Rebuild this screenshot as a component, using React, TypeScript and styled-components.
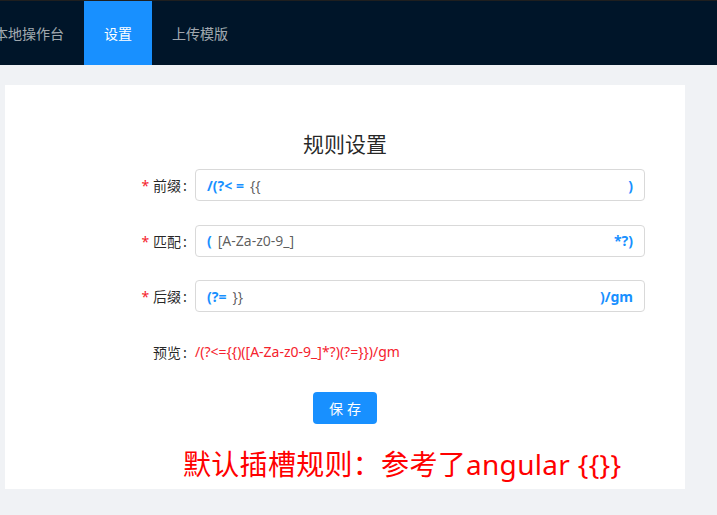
import React from 'react';
import styled, { createGlobalStyle } from 'styled-components';

const GlobalStyle = createGlobalStyle`
  html, body {
    margin: 0;
    padding: 0;
    background: #f0f2f5;
    font-family: "Noto Sans", "Noto Sans CJK SC", sans-serif;
    font-size: 14px;
  }
`;

const Page = styled.div`
  width: 717px;
  height: 515px;
  overflow: hidden;
  background: #f0f2f5;
  border-top: 1px solid #1f1f1f;
  box-sizing: border-box;
`;

const Header = styled.header`
  height: 64px;
  background: #001529;
  display: flex;
`;

const Menu = styled.nav`
  display: flex;
  margin-left: -26px;
`;

const MenuItem = styled.div<{ $active?: boolean }>`
  padding: 0 20px;
  line-height: 64px;
  font-family: "Noto Sans CJK SC", sans-serif;
  font-size: 14px;
  white-space: nowrap;
  color: ${p => (p.$active ? '#fff' : 'rgba(255,255,255,0.65)')};
  background: ${p => (p.$active ? '#1890ff' : 'transparent')};
`;

const Content = styled.main`
  padding: 20px 32px 0 5px;
`;

const Card = styled.section`
  background: #fff;
  height: 404px;
  padding-top: 42px;
  box-sizing: border-box;
`;

const Title = styled.h2`
  margin: 0 0 10px;
  text-align: center;
  font-family: "Noto Sans CJK SC", sans-serif;
  font-weight: 400;
  font-size: 21px;
  line-height: 32px;
  color: rgba(0, 0, 0, 0.85);
`;

const Row = styled.div<{ $gap?: number }>`
  display: grid;
  grid-template-columns: 190px 450px;
  align-items: center;
  height: 32px;
  margin-bottom: ${p => p.$gap ?? 23.5}px;
`;

const Label = styled.label`
  text-align: right;
  font-family: "Noto Sans CJK SC", sans-serif;
  font-size: 14px;
  color: rgba(0, 0, 0, 0.85);

  &::after {
    content: ':';
    margin: 0 8px 0 2px;
  }
`;

const Required = styled.span`
  color: #f5222d;
  margin-right: 4px;
  font-family: "Noto Sans", sans-serif;
`;

const InputBox = styled.div`
  height: 32px;
  box-sizing: border-box;
  border: 1px solid #d9d9d9;
  border-radius: 4px;
  display: flex;
  align-items: center;
  padding: 0 11px;
  font-size: 14px;
`;

const Affix = styled.span`
  color: #1890ff;
  font-weight: 700;
`;

const Value = styled.span`
  flex: 1;
  margin-left: 6px;
  color: rgba(0, 0, 0, 0.65);
`;

const Preview = styled.span`
  color: #f5222d;
  font-size: 14px;
`;

const Actions = styled.div`
  display: flex;
  justify-content: center;
  margin-top: 24px;
`;

const SaveButton = styled.button`
  width: 64px;
  height: 32px;
  border: none;
  border-radius: 4px;
  background: #1890ff;
  color: #fff;
  font-family: "Noto Sans CJK SC", sans-serif;
  font-size: 14px;
  letter-spacing: 4px;
  text-indent: 4px;
  padding: 0;
`;

const Note = styled.p`
  margin: 20px 0 0 178px;
  color: #ff0000;
  font-family: "Noto Sans", "Noto Sans CJK SC", sans-serif;
  font-size: 28px;
  line-height: 40px;
  letter-spacing: 0.3px;
`;

const fields = [
  { label: '前缀', prefix: '/(?< =', value: '{{', suffix: ')' },
  { label: '匹配', prefix: '(', value: '[A-Za-z0-9_]', suffix: '*?)' },
  { label: '后缀', prefix: '(?=', value: '}}', suffix: ')/gm' },
];

export default function App() {
  return (
    <Page>
      <GlobalStyle />
      <Header>
        <Menu>
          <MenuItem>本地操作台</MenuItem>
          <MenuItem $active>设置</MenuItem>
          <MenuItem>上传模版</MenuItem>
        </Menu>
      </Header>
      <Content>
        <Card>
          <Title>规则设置</Title>
          {fields.map(f => (
            <Row key={f.label}>
              <Label>
                <Required>*</Required>
                {f.label}
              </Label>
              <InputBox>
                <Affix>{f.prefix}</Affix>
                <Value>{f.value}</Value>
                <Affix>{f.suffix}</Affix>
              </InputBox>
            </Row>
          ))}
          <Row $gap={0}>
            <Label>预览</Label>
            <Preview>/(?&lt;={'{{'})([A-Za-z0-9_]*?)(?={'}}'})/gm</Preview>
          </Row>
          <Actions>
            <SaveButton>保存</SaveButton>
          </Actions>
          <Note>默认插槽规则：参考了angular {'{{}}'}</Note>
        </Card>
      </Content>
    </Page>
  );
}
